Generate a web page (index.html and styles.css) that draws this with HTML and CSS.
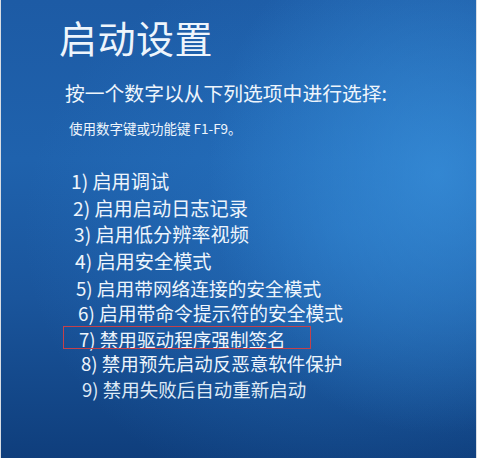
FILE: index.html
```html
<!DOCTYPE html>
<html lang="zh-CN">
<head>
<meta charset="utf-8">
<link rel="stylesheet" href="styles.css">
</head>
<body>
<div class="screen">
  <h1 class="title">启动设置</h1>
  <p class="prompt">按一个数字以从下列选项中进行选择:</p>
  <p class="hint">使用数字键或功能键 F1-F9。</p>
  <ol class="options">
    <li class="opt">1) 启用调试</li>
    <li class="opt">2) 启用启动日志记录</li>
    <li class="opt">3) 启用低分辨率视频</li>
    <li class="opt">4) 启用安全模式</li>
    <li class="opt">5) 启用带网络连接的安全模式</li>
    <li class="opt">6) 启用带命令提示符的安全模式</li>
    <li class="opt opt-marked">7) 禁用驱动程序强制签名</li>
    <li class="opt">8) 禁用预先启动反恶意软件保护</li>
    <li class="opt">9) 禁用失败后自动重新启动</li>
  </ol>
</div>
</body>
</html>
```
FILE: styles.css
```css
html, body {
  margin: 0;
  padding: 0;
  background: #ffffff;
}
.screen {
  box-sizing: border-box;
  width: 477px;
  height: 458px;
  overflow: hidden;
  border-left: 1px solid #d8dde4;
  border-right: 1px solid #d8dde4;
  padding: 15px 0 0 0;
  font-family: "Noto Sans CJK SC", "Noto Sans", sans-serif;
  color: #eef5fc;
  background:
    radial-gradient(ellipse 230px 260px at 92% 38%, rgba(60, 150, 225, 0.65), rgba(60, 150, 225, 0) 100%),
    radial-gradient(ellipse 320px 280px at 72% 50%, rgba(45, 130, 210, 0.45), rgba(45, 130, 210, 0) 100%),
    linear-gradient(180deg, #1d5ba5 0%, #1f62ad 35%, #1a559c 65%, #0f3e7c 100%);
}
.title {
  margin: 0 0 0 58px;
  font-size: 38px;
  line-height: 44px;
  font-weight: 400;
  letter-spacing: 0.5px;
}
.prompt {
  margin: 22px 0 0 64px;
  font-size: 19.8px;
  line-height: 24px;
  font-weight: 400;
}
.hint {
  margin: 14px 0 0 68px;
  font-size: 13.5px;
  line-height: 18px;
}
.options {
  list-style: none;
  margin: 31px 0 0 0;
  padding: 0;
}
.opt {
  position: relative;
  font-size: 19.2px;
  line-height: 26.7px;
  margin-left: 70px;
  width: max-content;
}
.opt:nth-child(2) { margin-left: 72px; }
.opt:nth-child(3) { margin-left: 73px; }
.opt:nth-child(4) { margin-left: 74px; }
.opt:nth-child(5) { margin-left: 75px; font-size: 18.7px; line-height: 25.5px; }
.opt:nth-child(6) { margin-left: 77px; font-size: 18.8px; line-height: 25.5px; }
.opt:nth-child(7) { margin-left: 78px; font-size: 18.6px; line-height: 25.5px; }
.opt:nth-child(8) { margin-left: 80px; font-size: 18.5px; line-height: 25.5px; }
.opt:nth-child(9) { margin-left: 81px; font-size: 18.5px; line-height: 25.5px; color: #dfeaf6; }
.opt-marked::after {
  content: "";
  position: absolute;
  box-sizing: border-box;
  left: -16px;
  top: 0;
  width: 248px;
  height: 23px;
  border: 1.5px solid #c4414a;
}
```
